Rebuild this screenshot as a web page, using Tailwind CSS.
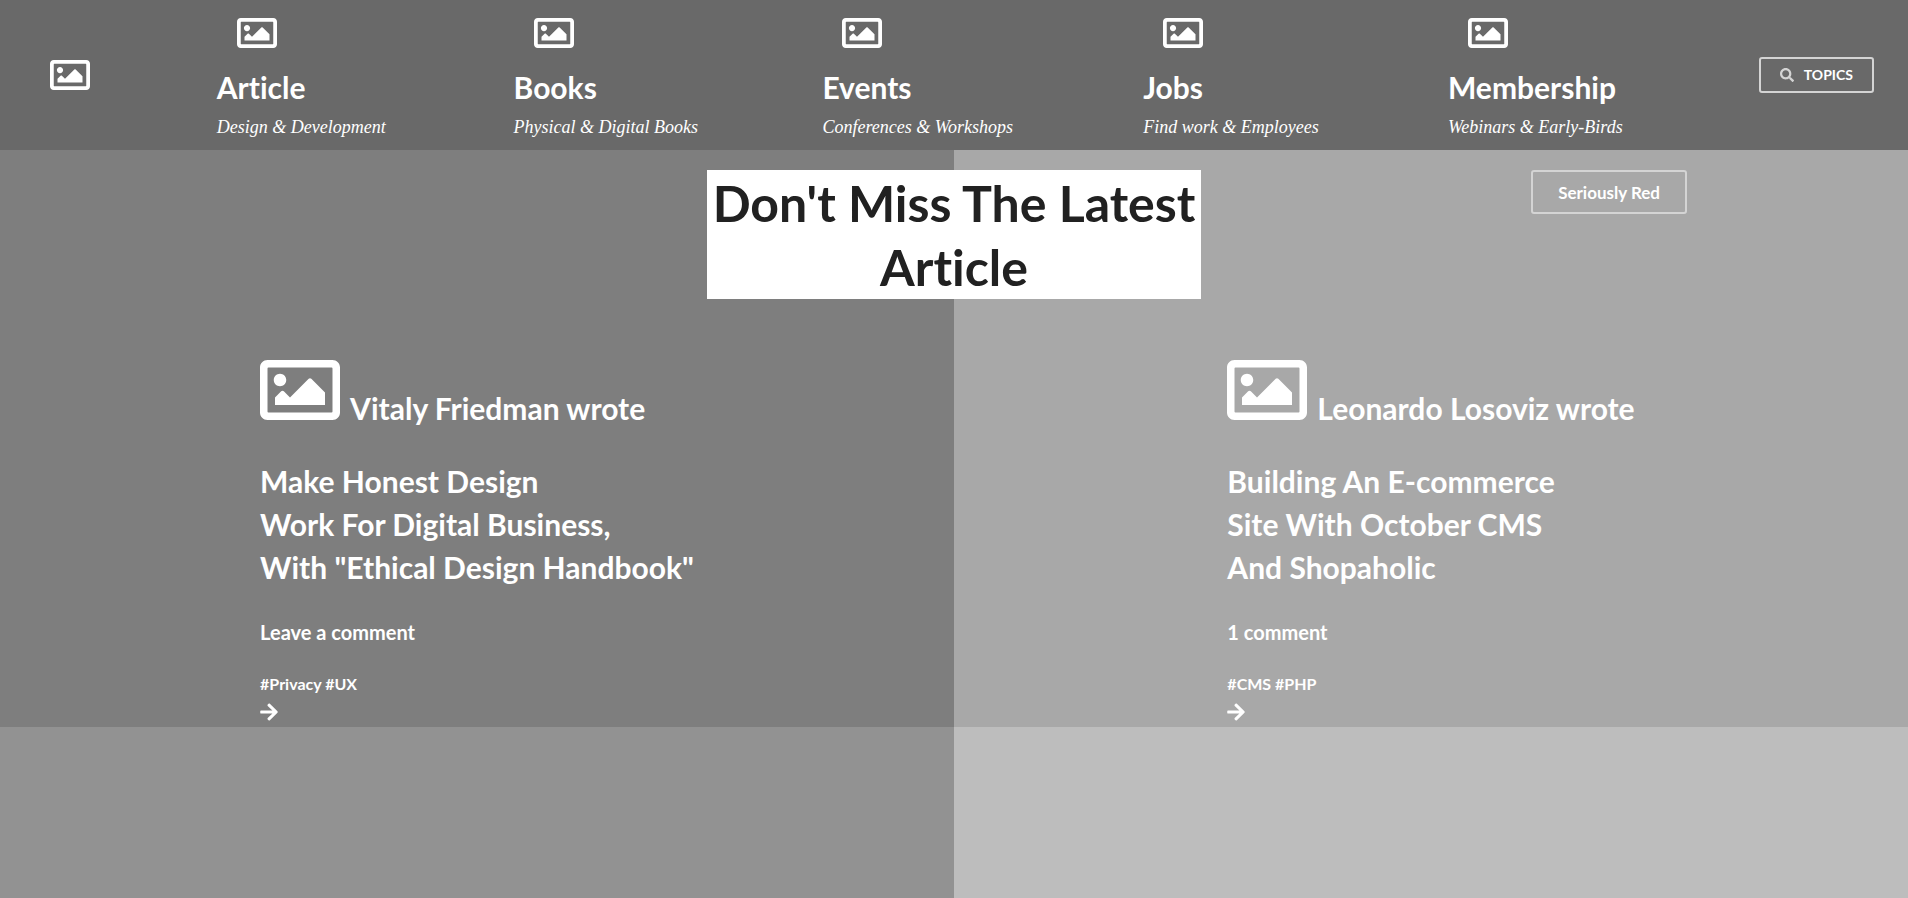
<!DOCTYPE html>
<html lang="en">
<head>
<meta charset="utf-8">
<title>Latest Articles</title>
<script src="https://cdn.jsdelivr.net/npm/@tailwindcss/browser@4"></script>
</head>
<body class="flex min-h-screen flex-col bg-white font-['Lato',sans-serif] font-bold text-white [font-variant-ligatures:none]">
<svg class="hidden" aria-hidden="true">
  <symbol id="image" viewBox="0 64 512 384"><path fill="currentColor" d="M464 64H48C21.49 64 0 85.49 0 112v288c0 26.51 21.49 48 48 48h416c26.51 0 48-21.49 48-48V112c0-26.51-21.49-48-48-48zm-6 336H54a6 6 0 0 1-6-6V118a6 6 0 0 1 6-6h404a6 6 0 0 1 6 6v276a6 6 0 0 1-6 6zM128 152c-22.091 0-40 17.909-40 40s17.909 40 40 40 40-17.909 40-40-17.909-40-40-40zM96 352h320v-80l-87.515-87.515c-4.686-4.686-12.284-4.686-16.971 0L192 304l-39.515-39.515c-4.686-4.686-12.284-4.686-16.971 0L96 304v48z"/></symbol>
  <symbol id="arrow" viewBox="0 0 448 512"><path fill="currentColor" d="M190.5 66.9l22.2-22.2c9.4-9.4 24.6-9.4 33.9 0L441 239c9.4 9.4 9.4 24.6 0 33.9L246.6 467.3c-9.4 9.4-24.6 9.4-33.9 0l-22.2-22.2c-9.5-9.5-9.3-25 .4-34.3L311.4 296H24c-13.3 0-24-10.7-24-24v-32c0-13.3 10.7-24 24-24h287.4L190.9 101.2c-9.8-9.3-10-24.8-.4-34.3z"/></symbol>
  <symbol id="search" viewBox="0 0 512 512"><path fill="currentColor" d="M505 442.7L405.3 343c-4.5-4.5-10.6-7-17-7H372c27.6-35.3 44-79.7 44-128C416 93.1 322.9 0 208 0S0 93.1 0 208s93.1 208 208 208c48.3 0 92.7-16.4 128-44v16.3c0 6.4 2.5 12.5 7 17l99.7 99.7c9.4 9.4 24.6 9.4 33.9 0l28.3-28.3c9.4-9.4 9.4-24.6.1-34zM208 336c-70.7 0-128-57.2-128-128 0-70.7 57.2-128 128-128 70.7 0 128 57.2 128 128 0 70.7-57.2 128-128 128z"/></symbol>
</svg>

<header class="bg-[#696969]">
  <nav class="flex items-center justify-between pr-[34px] pl-[50px]" aria-label="Main">
    <a href="#" aria-label="Home"><svg class="h-[30px] w-10"><use href="#image"/></svg></a>
    <a href="#" class="w-[170px] pt-[18px] pb-2 whitespace-nowrap">
      <svg class="ml-5 h-[30px] w-10"><use href="#image"/></svg>
      <span class="mt-[18px] block text-[30px] leading-[43px]">Article</span>
      <span class="mt-1 block font-['Liberation_Serif',serif] text-[18px] leading-[29px] font-normal italic">Design &amp; Development</span>
    </a>
    <a href="#" class="w-[182px] pt-[18px] pb-2 whitespace-nowrap">
      <svg class="ml-5 h-[30px] w-10"><use href="#image"/></svg>
      <span class="mt-[18px] block text-[30px] leading-[43px]">Books</span>
      <span class="mt-1 block font-['Liberation_Serif',serif] text-[18px] leading-[29px] font-normal italic">Physical &amp; Digital Books</span>
    </a>
    <a href="#" class="w-[194px] pt-[18px] pb-2 whitespace-nowrap">
      <svg class="ml-5 h-[30px] w-10"><use href="#image"/></svg>
      <span class="mt-[18px] block text-[30px] leading-[43px]">Events</span>
      <span class="mt-1 block font-['Liberation_Serif',serif] text-[18px] leading-[29px] font-normal italic">Conferences &amp; Workshops</span>
    </a>
    <a href="#" class="w-[178px] pt-[18px] pb-2 whitespace-nowrap">
      <svg class="ml-5 h-[30px] w-10"><use href="#image"/></svg>
      <span class="mt-[18px] block text-[30px] leading-[43px]">Jobs</span>
      <span class="mt-1 block font-['Liberation_Serif',serif] text-[18px] leading-[29px] font-normal italic">Find work &amp; Employees</span>
    </a>
    <a href="#" class="w-[184px] pt-[18px] pb-2 whitespace-nowrap">
      <svg class="ml-5 h-[30px] w-10"><use href="#image"/></svg>
      <span class="mt-[18px] block text-[30px] leading-[43px]">Membership</span>
      <span class="mt-1 block font-['Liberation_Serif',serif] text-[18px] leading-[29px] font-normal italic">Webinars &amp; Early-Birds</span>
    </a>
    <button type="button" class="flex h-9 items-center gap-[10px] rounded-[3px] border-2 border-[#d4d4d4] px-[19px] text-sm"><svg class="size-[14px] text-[#d4d4d4]"><use href="#search"/></svg>TOPICS</button>
  </nav>
</header>

<main class="relative flex grow flex-col">
  <div class="grid grid-cols-2">
    <article class="flex justify-center bg-[#7e7e7e] pt-[210px] pb-[5px]">
      <div>
        <p class="flex items-baseline gap-[10px] text-[30px] leading-[43px]"><svg class="h-[60px] w-20"><use href="#image"/></svg>Vitaly Friedman wrote</p>
        <h2 class="mt-[30px] text-[30px] leading-[43px]">Make Honest Design<br>Work For Digital Business,<br>With "Ethical Design Handbook"</h2>
        <a href="#" class="mt-[29px] block text-[20px] leading-7">Leave a comment</a>
        <p class="mt-[26px] text-base"><a href="#">#Privacy</a> <a href="#">#UX</a></p>
        <a href="#" class="mt-[6px] block" aria-label="Read article"><svg class="h-5 w-[18px]"><use href="#arrow"/></svg></a>
      </div>
    </article>
    <article class="flex justify-center bg-[#a8a8a8] pt-[210px] pb-[5px]">
      <div>
        <p class="flex items-baseline gap-[10px] text-[30px] leading-[43px]"><svg class="h-[60px] w-20"><use href="#image"/></svg>Leonardo Losoviz wrote</p>
        <h2 class="mt-[30px] text-[30px] leading-[43px]">Building An E-commerce<br>Site With October CMS<br>And Shopaholic</h2>
        <a href="#" class="mt-[29px] block text-[20px] leading-7">1 comment</a>
        <p class="mt-[26px] text-base"><a href="#">#CMS</a> <a href="#">#PHP</a></p>
        <a href="#" class="mt-[6px] block" aria-label="Read article"><svg class="h-5 w-[18px]"><use href="#arrow"/></svg></a>
      </div>
    </article>
  </div>
  <div class="grid grow grid-cols-2">
    <div class="bg-[#929292]"></div>
    <div class="bg-[#bdbdbd]"></div>
  </div>

  <!-- Title and promo button lie over both article columns -->
  <h1 class="absolute top-5 left-1/2 w-[494px] -translate-x-1/2 bg-white pt-px text-center text-[50px] leading-[64px] text-[#212121]">Don't Miss The Latest Article</h1>
  <button type="button" class="absolute top-5 right-[221px] h-11 rounded-[3px] border-2 border-[#d4d4d4] px-[25px] pt-px text-[17px]">Seriously Red</button>
</main>
</body>
</html>
